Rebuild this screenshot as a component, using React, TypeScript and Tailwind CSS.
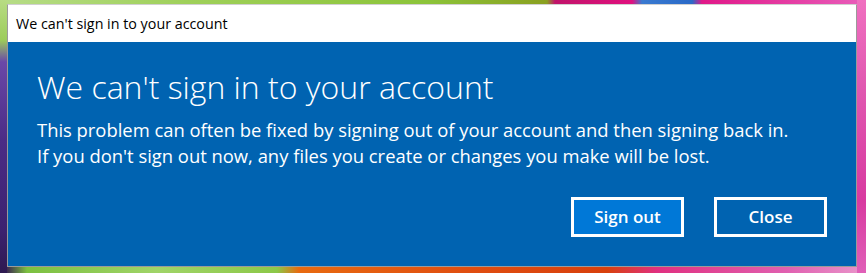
import React from 'react';

const font = { fontFamily: '"Open Sans", "Noto Sans", sans-serif' };

export default function App() {
  return (
    <div className="flex h-[273px] w-[866px] overflow-hidden" style={font}>
      {/* wallpaper, left edge */}
      <div className="h-full w-[7px] bg-[linear-gradient(to_bottom,#b8dc84_0px,#9ccc5a_40px,#6a48a8_62px,#4b2c86_140px,#3c2270_230px,#2e1a50_273px)]" />

      <div className="flex w-[850px] flex-col">
        {/* wallpaper, top edge */}
        <div className="h-[4px] bg-[linear-gradient(to_right,#b6dc86_0px,#9fd05a_180px,#8cc43a_420px,#8aa020_540px,#c0146a_548px,#e0107e_625px,#3a7ad0_635px,#2a6ac8_685px,#e01888_695px,#e85ab8_850px)]" />

        {/* dialog */}
        <div className="flex h-[263px] flex-col border border-[#9a9a9a] border-t-[#d0d0d0]">
          <div className="flex h-[37px] items-center bg-white pl-[8px] text-[14.3px] text-black">
            We can't sign in to your account
          </div>
          <div className="flex flex-1 flex-col bg-[#0063b1] pl-[29px] pr-[29px] text-white">
            <h1 className="mt-[25px] text-[32px] font-light leading-[40px]">
              We can't sign in to your account
            </h1>
            <p className="mt-[10px] text-[18.4px] leading-[26px]">
              This problem can often be fixed by signing out of your account and then signing back in.
              <br />
              If you don't sign out now, any files you create or changes you make will be lost.
            </p>
            <div className="mt-auto mb-[29px] flex justify-end gap-[30px]">
              <button className="h-[40px] w-[113px] border-[3px] border-white bg-[#0078d7] text-[17px] font-semibold text-white">
                Sign out
              </button>
              <button className="h-[40px] w-[113px] border-[3px] border-white bg-[#0063b1] text-[17px] font-semibold text-white">
                Close
              </button>
            </div>
          </div>
        </div>

        {/* wallpaper, bottom edge */}
        <div className="h-[6px] bg-[linear-gradient(to_right,#3c2a50_0px,#7cc040_20px,#a0d468_150px,#8cc848_270px,#e86a10_292px,#e04e10_460px,#d8400c_600px,#e03080_650px,#e060b0_780px,#e890c8_850px)]" />
      </div>

      {/* wallpaper, right edge */}
      <div className="h-full w-[9px] bg-[linear-gradient(to_bottom,#f070c0_0px,#e058b0_90px,#d83aa0_200px,#e060b8_273px)]" />
    </div>
  );
}
